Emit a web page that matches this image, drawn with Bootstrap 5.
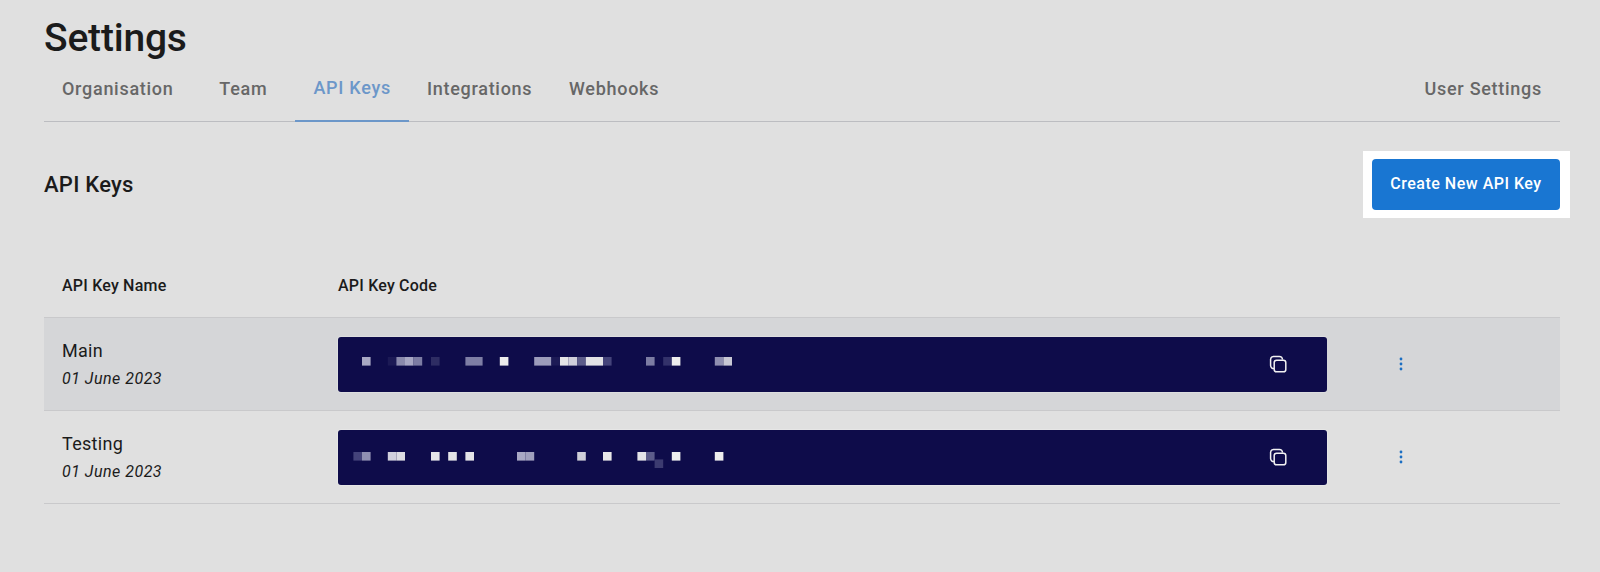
<!DOCTYPE html>
<html lang="en">
<head>
<meta charset="utf-8">
<title>Settings</title>
<link rel="stylesheet" href="https://cdn.jsdelivr.net/npm/bootstrap@5.3.0/dist/css/bootstrap.min.css">
<style>
html,body{height:100%}
body{background:#e0e0e0;font-family:Roboto,"Liberation Sans",sans-serif;color:#1b1b1b;overflow:hidden}
.page-wrap{padding:0 40px 0 44px}
.page-title{font-size:39px;font-weight:500;line-height:48px;margin:0;padding-top:14px;letter-spacing:-.2px}
.tab-bar{height:60px;border-bottom:1px solid #bcbdc1;margin-bottom:0}
.tab-item{display:flex;align-items:center;height:60px;padding:0 18px 8px;color:#676767;font-size:18px;font-weight:500;letter-spacing:.72px;text-decoration:none}
.tab-item.gap-org{margin-right:9.8px}
.tab-item.gap-team{margin-right:10px}
.tab-item.gap-int{margin-right:.7px}
.tab-item.tab-on{color:#6c97c9;border-bottom:2px solid #6c97c9}
.section-head{height:134px;padding-bottom:10px}
.section-title{font-size:22px;font-weight:500;margin:2px 0 0;letter-spacing:.25px}
.halo{background:#fff;padding:8px 9.5px;margin-right:-9.5px}
.btn-make{background:#1976d2;border:0;color:#fff;width:188px;height:51px;border-radius:4px;font-size:16px;font-weight:500;letter-spacing:.5px;padding:0}
.key-table{table-layout:fixed;margin:0;--bs-table-bg:transparent;--bs-table-border-color:#c9c9cb;width:100%}
.key-table th{font-size:16px;font-weight:500;letter-spacing:.2px;height:61px;padding:0 0 0 18px;vertical-align:middle;border-bottom:1px solid #c9c9cb;color:#1b1b1b;background:transparent}
.key-table th.col-code{padding-left:0;padding-right:0}
.key-table td{vertical-align:middle;padding:2px 0 0 18px;height:93.5px;background:transparent;color:#1b1b1b}
.key-table td.col-code{padding-left:0;padding-right:0}
.key-table tr.row-on td{background:#d5d6d8;height:93px}
.col-name{width:294px}
.col-code{width:989px}
.key-name{font-size:18px;letter-spacing:.3px;line-height:26px}
.key-date{font-size:16px;font-style:italic;letter-spacing:.5px;line-height:26px;margin-top:2px}
.key-box{background:#0e0c4a;height:55px;border-radius:3px;box-shadow:0 0 0 1px rgba(255,255,255,.2);padding:0 39px 0 7.5px}
.key-blur{display:block;width:400px;height:32px;margin-bottom:11.6px}
.copy-ico{display:block;margin-bottom:1px}
.dots-btn{display:block;margin-left:53px;margin-bottom:2px}
</style>
</head>
<body>
<div class="page-wrap">
  <h1 class="page-title">Settings</h1>
  <nav class="tab-bar d-flex">
    <a class="tab-item gap-org" href="#">Organisation</a>
    <a class="tab-item gap-team" href="#">Team</a>
    <a class="tab-item tab-on" href="#">API Keys</a>
    <a class="tab-item gap-int" href="#">Integrations</a>
    <a class="tab-item" href="#">Webhooks</a>
    <a class="tab-item ms-auto" href="#">User Settings</a>
  </nav>
  <div class="section-head d-flex align-items-center justify-content-between">
    <h2 class="section-title">API Keys</h2>
    <div class="halo"><button class="btn-make" type="button">Create New API Key</button></div>
  </div>
  <table class="table key-table">
    <thead>
      <tr><th class="col-name">API Key Name</th><th class="col-code">API Key Code</th><th></th></tr>
    </thead>
    <tbody>
      <tr class="row-on">
        <td>
          <div class="key-name">Main</div>
          <div class="key-date">01 June 2023</div>
        </td>
        <td class="col-code">
          <div class="key-box d-flex align-items-center justify-content-between">
            <svg class="key-blur" viewBox="0 0 400 32" aria-hidden="true">
              <rect x="16" y="14" width="8.6" height="8.6" fill="#a9a9c4"/><rect x="41.8" y="14" width="8.6" height="8.6" fill="#1c1a55"/><rect x="50.4" y="14" width="8.6" height="8.6" fill="#8a8aac"/><rect x="59" y="14" width="8.6" height="8.6" fill="#a7a7c3"/><rect x="67.6" y="14" width="8.6" height="8.6" fill="#7c7ca3"/><rect x="85" y="14" width="8.6" height="8.6" fill="#2e2d63"/><rect x="119.4" y="14" width="17.2" height="8.6" fill="#7e7ea5"/><rect x="153.8" y="14" width="8.6" height="8.6" fill="#ececec"/><rect x="188.2" y="14" width="17.2" height="8.6" fill="#9c9cbb"/><rect x="205.4" y="14" width="8.6" height="8.6" fill="#1c1a55"/><rect x="214" y="14" width="8.6" height="8.6" fill="#e4e4e6"/><rect x="222.6" y="14" width="8.6" height="8.6" fill="#cfcfdb"/><rect x="231.2" y="14" width="8.6" height="8.6" fill="#5c5c8a"/><rect x="239.8" y="14" width="17.2" height="8.6" fill="#e2e2e6"/><rect x="257" y="14" width="8.6" height="8.6" fill="#44437a"/><rect x="300" y="14" width="8.6" height="8.6" fill="#7c7ca3"/><rect x="317.2" y="14" width="8.6" height="8.6" fill="#33326a"/><rect x="325.8" y="14" width="8.6" height="8.6" fill="#eeeeee"/><rect x="368.8" y="14" width="8.6" height="8.6" fill="#8f8fb0"/><rect x="377.4" y="14" width="8.6" height="8.6" fill="#c8c8d4"/>
            </svg>
            <svg class="copy-ico" width="20" height="20" viewBox="0 0 20 20" fill="none" stroke="#f2f2f2" stroke-width="1.5" aria-hidden="true"><rect x="6.2" y="6.2" width="11.6" height="11.6" rx="2.4"/><path d="M6 14.5A3 3 0 0 1 2.6 11.6V5.2A3 3 0 0 1 5.4 2.4H11.4A3 3 0 0 1 14.4 5.6"/></svg>
          </div>
        </td>
        <td>
          <svg class="dots-btn" width="6" height="14" viewBox="0 0 6 14" fill="#1b6ec2" aria-hidden="true"><circle cx="3" cy="2" r="1.4"/><circle cx="3" cy="7" r="1.4"/><circle cx="3" cy="12" r="1.4"/></svg>
        </td>
      </tr>
      <tr>
        <td>
          <div class="key-name">Testing</div>
          <div class="key-date">01 June 2023</div>
        </td>
        <td class="col-code">
          <div class="key-box d-flex align-items-center justify-content-between">
            <svg class="key-blur" viewBox="0 0 400 32" aria-hidden="true">
              <rect x="7.4" y="16" width="8.6" height="8.6" fill="#44437a"/><rect x="16" y="16" width="8.6" height="8.6" fill="#9090b2"/><rect x="41.8" y="16" width="8.6" height="8.6" fill="#d0d0dc"/><rect x="50.4" y="16" width="8.6" height="8.6" fill="#dcdce2"/><rect x="85" y="16" width="8.6" height="8.6" fill="#e4e4e8"/><rect x="102.2" y="16" width="8.6" height="8.6" fill="#e4e4e8"/><rect x="119.4" y="16" width="8.6" height="8.6" fill="#e4e4e8"/><rect x="171" y="16" width="8.6" height="8.6" fill="#a9a9c4"/><rect x="179.6" y="16" width="8.6" height="8.6" fill="#a0a0bd"/><rect x="231.2" y="16" width="8.6" height="8.6" fill="#cfcfd8"/><rect x="257" y="16" width="8.6" height="8.6" fill="#e8e8e8"/><rect x="291.4" y="16" width="8.6" height="8.6" fill="#e4e4e8"/><rect x="300" y="16" width="8.6" height="8.6" fill="#5c5c8a"/><rect x="308.6" y="23.4" width="8.6" height="8.6" fill="#3c3b70"/><rect x="325.8" y="16" width="8.6" height="8.6" fill="#eeeeee"/><rect x="368.8" y="16" width="8.6" height="8.6" fill="#eeeeee"/>
            </svg>
            <svg class="copy-ico" width="20" height="20" viewBox="0 0 20 20" fill="none" stroke="#f2f2f2" stroke-width="1.5" aria-hidden="true"><rect x="6.2" y="6.2" width="11.6" height="11.6" rx="2.4"/><path d="M6 14.5A3 3 0 0 1 2.6 11.6V5.2A3 3 0 0 1 5.4 2.4H11.4A3 3 0 0 1 14.4 5.6"/></svg>
          </div>
        </td>
        <td>
          <svg class="dots-btn" width="6" height="14" viewBox="0 0 6 14" fill="#1b6ec2" aria-hidden="true"><circle cx="3" cy="2" r="1.4"/><circle cx="3" cy="7" r="1.4"/><circle cx="3" cy="12" r="1.4"/></svg>
        </td>
      </tr>
    </tbody>
  </table>
</div>
<script src="https://cdn.jsdelivr.net/npm/bootstrap@5.3.0/dist/js/bootstrap.bundle.min.js"></script>
</body>
</html>
